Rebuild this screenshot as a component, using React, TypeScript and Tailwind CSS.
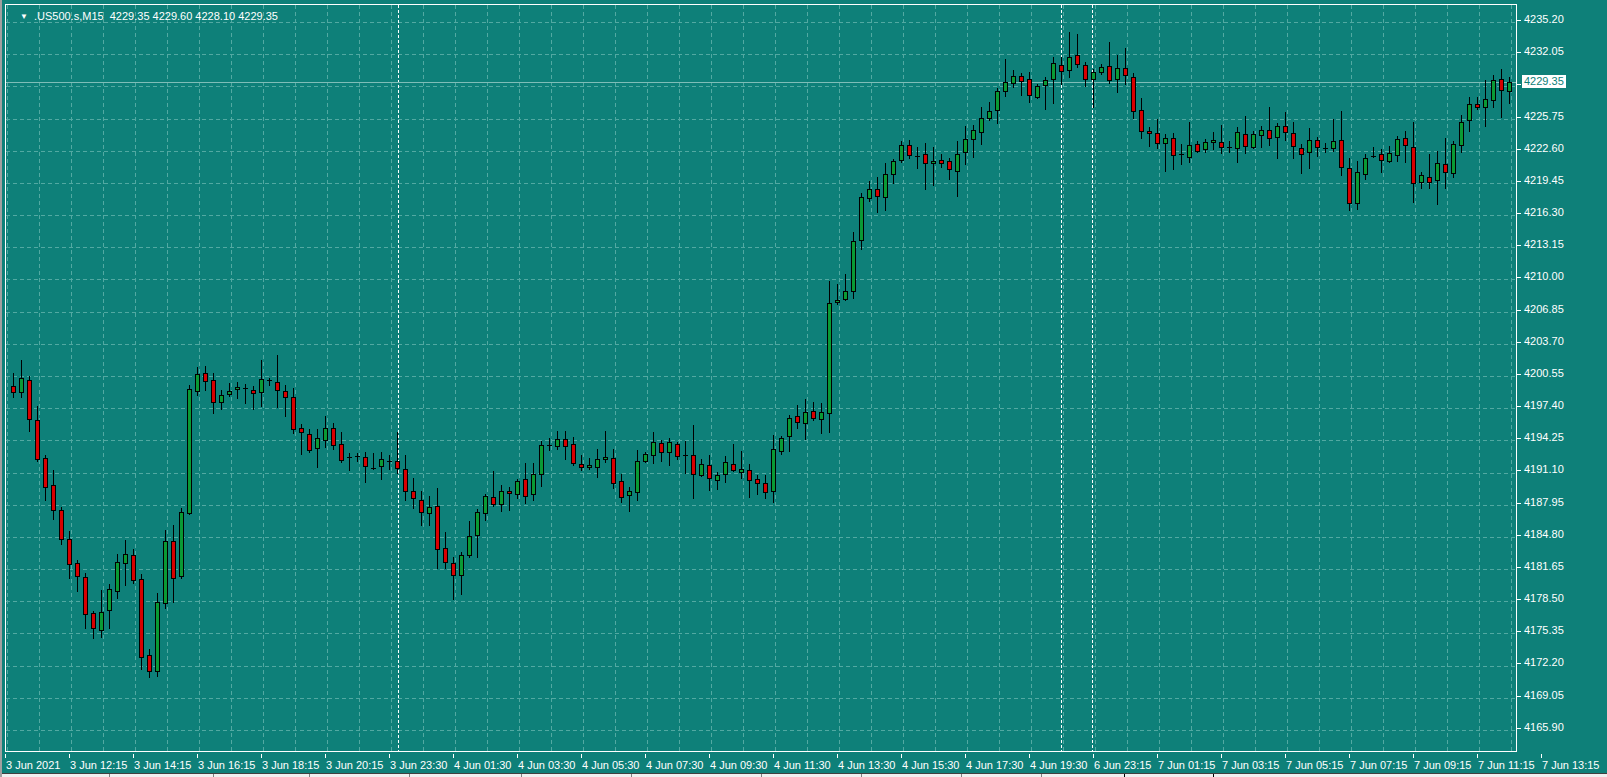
const PLOT_W = 1510;
const PLOT_H = 746;

const keys: [number, number][] = [
  [8, 385], [20, 375], [30, 460], [45, 500], [60, 560], [75, 580], [90, 640], [100, 600],
  [110, 560], [125, 550], [140, 680], [150, 620], [160, 540], [172, 605], [180, 405], [190, 365],
  [205, 385], [220, 400], [235, 375], [250, 380], [265, 370], [280, 390], [300, 450], [320, 430],
  [340, 460], [360, 460], [380, 465], [395, 470], [410, 490], [425, 505], [435, 560], [450, 565],
  [465, 530], [480, 500], [500, 490], [520, 480], [540, 440], [560, 440], [580, 460], [600, 460],
  [620, 490], [640, 450], [660, 435], [680, 450], [700, 470], [720, 465], [740, 470], [760, 480],
  [770, 430], [790, 420], [805, 415], [818, 400], [822, 305], [835, 280], [845, 270], [850, 195],
  [870, 185], [890, 155], [905, 145], [920, 165], [940, 160], [960, 140], [975, 120], [990, 100],
  [1000, 80], [1010, 75], [1020, 90], [1035, 80], [1045, 70], [1058, 55], [1070, 70], [1090, 70],
  [1105, 65], [1120, 80], [1130, 120], [1145, 130], [1160, 130], [1175, 150], [1190, 150],
  [1210, 135], [1230, 130], [1250, 135], [1270, 125], [1290, 140], [1310, 145], [1330, 140],
  [1345, 210], [1355, 150], [1375, 150], [1395, 130], [1410, 185], [1425, 165], [1440, 160],
  [1455, 125], [1470, 95], [1485, 80], [1500, 85], [1510, 82],
];

function interp(x: number) {
  for (let i = 1; i < keys.length; i++) {
    const [x0, y0] = keys[i - 1];
    const [x1, y1] = keys[i];
    if (x <= x1) return y0 + ((y1 - y0) * (x - x0)) / (x1 - x0);
  }
  return keys[keys.length - 1][1];
}

function rng(seed: number) {
  return () => {
    seed |= 0;
    seed = (seed + 0x6d2b79f5) | 0;
    let t = Math.imul(seed ^ (seed >>> 15), 1 | seed);
    t = (t + Math.imul(t ^ (t >>> 7), 61 | t)) ^ t;
    return ((t ^ (t >>> 14)) >>> 0) / 4294967296;
  };
}

type Candle = { x: number; o: number; c: number; h: number; l: number };

function makeCandles(): Candle[] {
  const r = rng(42);
  const out: Candle[] = [];
  let prev = interp(8) - 4;
  for (let i = 0; i < 188; i++) {
    const px = 8 + i * 8;
    const c = interp(px) + (r() - 0.5) * 22;
    const o = prev;
    const h = Math.min(o, c) - r() * r() * 30 - 2;
    const l = Math.max(o, c) + r() * r() * 30 + 2;
    out.push({ x: px - 4, o, c, h, l });
    prev = c + (r() - 0.5) * 4;
  }
  return out;
}

const candles = makeCandles();

const prices = [
  "4235.20", "4232.05", "4229.35", "4225.75", "4222.60", "4219.45", "4216.30", "4213.15",
  "4210.00", "4206.85", "4203.70", "4200.55", "4197.40", "4194.25", "4191.10", "4187.95",
  "4184.80", "4181.65", "4178.50", "4175.35", "4172.20", "4169.05", "4165.90",
];

const times = [
  "3 Jun 2021", "3 Jun 12:15", "3 Jun 14:15", "3 Jun 16:15", "3 Jun 18:15", "3 Jun 20:15",
  "3 Jun 23:30", "4 Jun 01:30", "4 Jun 03:30", "4 Jun 05:30", "4 Jun 07:30", "4 Jun 09:30",
  "4 Jun 11:30", "4 Jun 13:30", "4 Jun 15:30", "4 Jun 17:30", "4 Jun 19:30", "6 Jun 23:15",
  "7 Jun 01:15", "7 Jun 03:15", "7 Jun 05:15", "7 Jun 07:15", "7 Jun 09:15", "7 Jun 11:15",
  "7 Jun 13:15",
];

function ChartCanvas() {
  const vLines = Array.from({ length: 48 }, (_, k) => 1 + k * 32);
  const hLines = prices.map((_, k) => 17 + k * 32.18);
  return (
    <svg width={PLOT_W} height={PLOT_H} className="block">
      {vLines.map((x) => (
        <line key={"v" + x} x1={x + 0.5} y1={0} x2={x + 0.5} y2={PLOT_H} stroke="#52a9a2" strokeDasharray="4 3" />
      ))}
      {hLines.map((y) => (
        <line key={"h" + y} x1={0} y1={Math.round(y) + 0.5} x2={PLOT_W} y2={Math.round(y) + 0.5} stroke="#52a9a2" strokeDasharray="4 3" />
      ))}
      {[392, 1055, 1086].map((x) => (
        <line key={"s" + x} x1={x + 0.5} y1={0} x2={x + 0.5} y2={PLOT_H} stroke="#ffffff" strokeDasharray="3 2" />
      ))}
      <line x1={0} y1={77.5} x2={PLOT_W} y2={77.5} stroke="#7fbdb8" />
      {candles.map((k, i) => {
        const top = Math.round(Math.min(k.o, k.c));
        const bot = Math.round(Math.max(k.o, k.c));
        const up = k.c < k.o;
        const cx = k.x + 3.5;
        return (
          <g key={i}>
            <line x1={cx} y1={Math.round(k.h)} x2={cx} y2={Math.round(k.l)} stroke="#000" />
            {bot - top < 2 ? (
              <line x1={k.x + 1} y1={top + 0.5} x2={k.x + 6} y2={top + 0.5} stroke="#000" />
            ) : (
              <rect x={k.x + 1.5} y={top + 0.5} width={4} height={bot - top} fill={up ? "#0a9a35" : "#d80000"} stroke="#000" />
            )}
          </g>
        );
      })}
    </svg>
  );
}

export default function App() {
  return (
    <div
      className="w-[1607px] h-[777px] overflow-hidden bg-[#0e8079] border-l-2 border-[#a0a0a0] flex flex-col text-white"
      style={{ fontFamily: "'Liberation Sans', Arial, sans-serif" }}
    >
      <div className="flex pt-[4px] pl-[3px] shrink-0">
        <div className="relative shrink-0 border border-white w-[1512px] h-[748px]">
          <ChartCanvas />
          <div className="absolute left-[14px] top-[6px] text-[11px] leading-none flex items-center gap-[6px]">
            <span className="text-[8px]">▼</span>
            <span>.US500.s,M15&nbsp; 4229.35 4229.60 4228.10 4229.35</span>
          </div>
        </div>
        <div className="relative shrink-0 flex flex-col pt-[10px] text-[11px] leading-none">
          {prices.map((p) => (
            <div key={p} className="h-[32.18px] flex items-start gap-[3px]">
              <span className="w-[4px] h-px bg-white mt-[6px]" />
              <span>{p}</span>
            </div>
          ))}
          <div className="absolute left-[5px] top-[71px] bg-white text-[#0e8079] px-[2px] py-[1px] text-[11px] leading-none">
            4229.35
          </div>
        </div>
      </div>
      <div className="flex pl-[3px] h-[19px] shrink-0 text-[11px] leading-none">
        {times.map((t) => (
          <div key={t} className="w-[64px] shrink-0 flex flex-col">
            <span className="w-px h-[4px] bg-white" />
            <span className="pl-[1px] pt-[2px] whitespace-nowrap">{t}</span>
          </div>
        ))}
      </div>
      <div className="flex-1 bg-[#f0f0f0] border-t border-[#404040] flex">
        <div className="w-[1123px] border-r border-[#000] flex">
          {[108, 212, 308, 408, 520, 630, 760, 860, 960, 1040].map((x, i, a) => (
            <div key={x} className="border-r border-[#808080]" style={{ width: x - (i ? a[i - 1] : 0) }} />
          ))}
        </div>
        <div className="w-[88px]" />
        <div className="flex-1 border-l border-[#000]" />
      </div>
    </div>
  );
}
